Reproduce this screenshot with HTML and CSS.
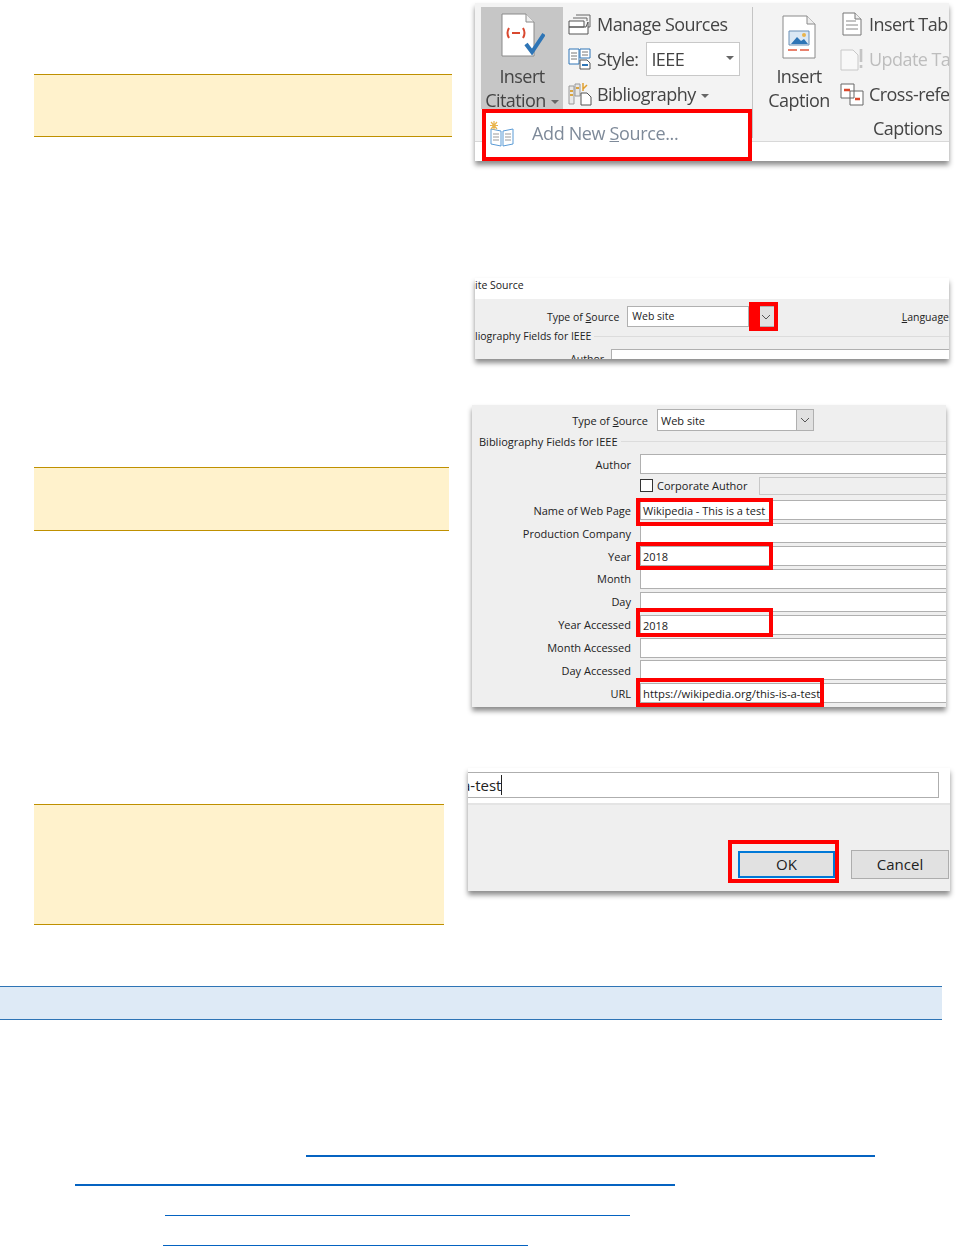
FILE: index.html
```html
<!DOCTYPE html>
<html lang="en">
<head>
<meta charset="utf-8">
<title>Add a citation source</title>
<link rel="stylesheet" href="styles.css">
</head>
<body>
<main class="page">

  <section class="row row-ribbon">
    <div class="note note-a"></div>
    <div class="shot shot-ribbon">
      <div class="ribbon soft">
        <div class="cite-btn">
          <svg class="big-icon" viewBox="0 0 46 44" width="46" height="44">
            <path d="M3 1h24l8 8v34H3z" fill="#fff" stroke="#8a8a8a"/>
            <path d="M27 1v8h8" fill="#eee" stroke="#8a8a8a"/>
            <path d="M10 15q-3 5 0 10M24 15q3 5 0 10M13 20h8" fill="none" stroke="#d9482f" stroke-width="2"/>
            <path d="M27 31l6 8 12-18" fill="none" stroke="#2e75b6" stroke-width="4"/>
          </svg>
          <span class="cite-label">Insert</span>
          <span class="cite-label">Citation<i class="caret"></i></span>
        </div>
        <div class="tool-col tool-col-main">
          <div class="tool">
            <svg viewBox="0 0 24 24" width="24" height="24"><path d="M5 6h14v3M8 3h14v12h-2" fill="none" stroke="#666"/><path d="M1 9h15v6H1zM1 15h17l2-5v12H1z" fill="#fff" stroke="#555"/></svg>
            <span>Manage Sources</span>
          </div>
          <div class="tool">
            <svg viewBox="0 0 24 24" width="24" height="24"><path d="M1 2h10v15H1zM12 2h10v9H12z" fill="#fff" stroke="#2e75b6"/><path d="M3 6h6M3 9h6M3 12h6M14 5h6M14 8h6" stroke="#777"/><path d="M12 13h7l3 3v6H12z" fill="#fff" stroke="#555"/><path d="M14 18h6" stroke="#2e75b6" stroke-width="2"/></svg>
            <span class="style-label">Style:</span>
            <span class="style-select"><span>IEEE</span><i class="caret"></i></span>
          </div>
          <div class="tool">
            <svg viewBox="0 0 24 24" width="24" height="24"><path d="M1 4h5v18H1zM7 2h5v12H7z" fill="#e8e8e8" stroke="#999"/><path d="M2 9h3M2 13h3M8 6h3" stroke="#d9a441" stroke-width="2"/><path d="M13 11h6l4 4v8H13z" fill="#fff" stroke="#555"/><path d="M15 1v8M19 3l-4 4" stroke="#e0a030" stroke-width="1.5"/></svg>
            <span>Bibliography<i class="caret"></i></span>
          </div>
        </div>
        <div class="divider"></div>
        <div class="caption-group">
          <div class="caption-tools">
            <div class="caption-btn">
              <svg class="big-icon" viewBox="0 0 34 44" width="34" height="44">
                <path d="M1 1h24l8 8v34H1z" fill="#fff" stroke="#8a8a8a"/>
                <path d="M25 1v8h8" fill="#eee" stroke="#8a8a8a"/>
                <path d="M7 16h20v14H7z" fill="#dbe8f4" stroke="#6a8fb5"/>
                <path d="M9 29l6-7 4 4 3-2 4 5z" fill="#2e75b6"/>
                <circle cx="22" cy="20" r="2" fill="#e9b44c"/>
                <path d="M6 35h9M18 35h9" stroke="#e2583e" stroke-width="1.5"/>
              </svg>
              <span class="cite-label">Insert</span>
              <span class="cite-label">Caption</span>
            </div>
            <div class="tool-col">
              <div class="tool">
                <svg viewBox="0 0 24 24" width="24" height="24"><path d="M3 1h12l6 6v16H3z" fill="#fff" stroke="#777"/><path d="M15 1v6h6" fill="#eee" stroke="#777"/><path d="M6 9h10M6 13h12M6 17h12" stroke="#888"/></svg>
                <span>Insert Table of Figures</span>
              </div>
              <div class="tool tool-off">
                <svg viewBox="0 0 24 24" width="24" height="24"><path d="M1 3h12l5 5v15H1z" fill="#f8f8f8" stroke="#c8c8c8"/><path d="M21 2v13M21 18v3" stroke="#c4c4c4" stroke-width="2.6"/></svg>
                <span>Update Table</span>
              </div>
              <div class="tool">
                <svg viewBox="0 0 24 24" width="24" height="24"><path d="M1 2h13v14H1zM10 9h13v14H10z" fill="#fff" stroke="#666"/><path d="M4 8h6M15 17h5" stroke="#d9472b" stroke-width="2.4"/></svg>
                <span>Cross-reference</span>
              </div>
            </div>
          </div>
          <div class="group-name">Captions</div>
        </div>
      </div>
      <div class="mark mark-add">
        <svg class="soft" viewBox="0 0 26 26" width="26" height="26"><path d="M2 8l10 2v15L2 23zM24 8l-10 2v15l10-2z" fill="#fff" stroke="#5b9bd5"/><path d="M4 13h6M4 16h6M4 19h6M16 13h6M16 16h6M16 19h6" stroke="#999"/><path d="M5 0v9M1 4.500h8M2 1l6 7M8 1L2 8" stroke="#e9b44c" stroke-width="1.200"/></svg>
        <span class="add-text soft">Add New <u>S</u>ource...</span>
      </div>
    </div>
  </section>

  <section class="row row-source">
    <div class="shot shot-source">
      <div class="source-title">ite Source</div>
      <div class="source-body">
        <div class="source-line">
          <span class="source-type">Type of <u>S</u>ource</span>
          <span class="source-input">Web site</span>
          <span class="source-arrow"><svg viewBox="0 0 10 6" width="10" height="6"><path d="M1 1l4 4 4-4" fill="none" stroke="#555"/></svg></span>
          <span class="source-lang"><u>L</u>anguage</span>
        </div>
        <div class="legend legend-cut"><span>liography Fields for IEEE</span><i></i></div>
        <div class="source-line source-author">
          <span class="source-author-label">Author</span>
          <span class="source-author-input"></span>
        </div>
      </div>
      <div class="mark mark-arrow"></div>
    </div>
  </section>

  <section class="row row-dialog">
    <div class="note note-b"></div>
    <div class="shot shot-dialog">
      <div class="type-line">
        <span class="type-label">Type of <u>S</u>ource</span>
        <span class="type-select"><span>Web site</span><span class="type-arrow"><svg viewBox="0 0 10 6" width="10" height="6"><path d="M1 1l4 4 4-4" fill="none" stroke="#555"/></svg></span></span>
      </div>
      <div class="legend legend-full"><span>Bibliography Fields for IEEE</span><i></i></div>
      <div class="fields">
        <label>Author</label><span class="input"></span>
        <span></span>
        <span class="corp"><i class="check"></i><span>Corporate Author</span><i class="corp-field"></i></span>
        <label>Name of Web Page</label><span class="input">Wikipedia - This is a test</span>
        <label>Production Company</label><span class="input"></span>
        <label>Year</label><span class="input">2018</span>
        <label>Month</label><span class="input"></span>
        <label>Day</label><span class="input"></span>
        <label>Year Accessed</label><span class="input">2018</span>
        <label>Month Accessed</label><span class="input"></span>
        <label>Day Accessed</label><span class="input"></span>
        <label>URL</label><span class="input input-url">https://wikipedia.org/this-is-a-test</span>
      </div>
      <div class="mark mark-name"></div>
      <div class="mark mark-year"></div>
      <div class="mark mark-accessed"></div>
      <div class="mark mark-url"></div>
    </div>
  </section>

  <section class="row row-ok">
    <div class="note note-c"></div>
    <div class="shot shot-ok">
      <div class="ok-top"><span class="ok-input"><span class="ok-text">a-test</span><i class="cursor"></i></span></div>
      <div class="ok-actions">
        <span class="btn btn-ok">OK</span>
        <span class="btn btn-cancel">Cancel</span>
      </div>
      <div class="mark mark-ok"></div>
    </div>
  </section>

  <div class="band"></div>

  <a class="rule rule-1" href="#"></a>
  <a class="rule rule-2" href="#"></a>
  <a class="rule rule-3" href="#"></a>
  <a class="rule rule-4" href="#"></a>
</main>
</body>
</html>
```

FILE: styles.css
```css
* { box-sizing: border-box; }
html, body { margin: 0; padding: 0; background: #fff; }
.page {
  width: 958px;
  height: 1246px;
  padding-top: 3px;
  overflow: hidden;
  font-family: "Open Sans", "Noto Sans", sans-serif;
  color: #2b2b2b;
}
.row { display: flex; align-items: flex-start; }
.row-source { margin-top: 117px; }
.row-dialog { margin-top: 46px; }
.row-ok { margin-top: 61px; }

.note {
  margin-left: 34px;
  background: #fff2cc;
  border-top: 1px solid #bf9000;
  border-bottom: 1px solid #bf9000;
}
.note-a { width: 418px; height: 63px; margin-top: 71px; }
.note-b { width: 415px; height: 64px; margin-top: 62px; }
.note-c { width: 410px; height: 121px; margin-top: 36px; }

.shot {
  position: relative;
  flex: none;
  overflow: visible;
  box-shadow: 0 4px 5px rgba(0, 0, 0, .45);
}
.mark { position: absolute; border: 4px solid #f00; }
.soft { filter: blur(.4px); }

/* ribbon */
.shot-ribbon { width: 474px; height: 158px; margin-left: 23px; background: #fff; }
.ribbon {
  display: flex;
  width: 474px;
  height: 139px;
  padding: 4px 0 0 6px;
  background: #f3f3f3;
  border-bottom: 1px solid #d8d8d8;
  overflow: hidden;
  font-size: 18px;
  letter-spacing: -.55px;
  color: #444;
}
.cite-btn {
  display: flex;
  flex-direction: column;
  align-items: center;
  flex: none;
  width: 82px;
  height: 102px;
  padding-top: 6px;
  background: #c6c6c6;
}
.big-icon { flex: none; margin-bottom: 7px; }
.cite-label { line-height: 24px; white-space: nowrap; }
.caret {
  display: inline-block;
  width: 0;
  height: 0;
  margin: 0 0 3px 5px;
  border: 4px solid transparent;
  border-top-color: #666;
  border-bottom: 0;
}
.tool-col {
  display: flex;
  flex-direction: column;
  flex: none;
  gap: 11px;
  padding-top: 5px;
}
.tool-col-main { width: 184px; margin-left: 5px; }
.tool {
  display: flex;
  align-items: center;
  gap: 5px;
  height: 24px;
  white-space: nowrap;
}
.tool svg { flex: none; }
.tool-off { color: #bdbdbd; }
.style-select {
  display: flex;
  align-items: center;
  justify-content: space-between;
  width: 94px;
  height: 34px;
  margin-left: 3px;
  padding: 0 5px 0 4px;
  background: #fff;
  border: 1px solid #c8c8c8;
}
.divider { flex: none; width: 1px; height: 131px; background: #c4c4c4; }
.caption-group { flex: none; }
.caption-tools { display: flex; }
.caption-btn {
  display: flex;
  flex-direction: column;
  align-items: center;
  flex: none;
  width: 87px;
  padding: 8px 0 0 5px;
}
.caption-btn .big-icon { margin-bottom: 5px; }
.group-name { width: 312px; margin-top: 4px; padding-left: 120px; line-height: 24px; }
.mark-add {
  left: 7px;
  top: 106px;
  display: flex;
  align-items: center;
  width: 270px;
  height: 52px;
  padding: 0 0 2px 3px;
  background: #fff;
}
.add-text { margin-left: 17px; padding-bottom: 2px; font-size: 18px; letter-spacing: -.36px; color: #7e8a99; }

/* source strip */
.shot-source { width: 474px; height: 81px; margin-left: 475px; background: #efefef; font-size: 10.500px; color: #222; }
.source-title { height: 21px; background: #fff; line-height: 14px; }
.source-body { padding-top: 7px; height: 60px; overflow: hidden; }
.source-line { display: flex; align-items: center; height: 21px; }
.source-type { width: 145px; text-align: right; }
.source-input {
  width: 122px;
  height: 21px;
  margin-left: 8px;
  padding-left: 4px;
  background: #fff;
  border: 1px solid #b0b0b0;
  line-height: 19px;
}
.source-arrow {
  display: flex;
  align-items: center;
  justify-content: center;
  width: 17px;
  height: 21px;
  margin-left: 9px;
  background: #e1e1e1;
  border: 1px solid #b0b0b0;
}
.source-lang { margin-left: 127px; white-space: nowrap; }
.legend { display: flex; align-items: center; white-space: nowrap; }
.legend i { flex: 1; height: 1px; margin-left: 3px; background: #dcdcdc; }
.legend-cut { height: 18px; }
.source-author { margin-top: 4px; align-items: flex-start; }
.source-author-label { width: 129px; padding-top: 3px; text-align: right; }
.source-author-input { flex: 1; height: 21px; margin-left: 7px; background: #fff; border: 1px solid #b0b0b0; border-right: 0; }
.mark-arrow { left: 274px; top: 24px; width: 29px; height: 29px; border-left-width: 11px; }

/* dialog */
.shot-dialog {
  width: 474px;
  height: 302px;
  margin-left: 23px;
  padding-top: 4px;
  background: #efefef;
  font-size: 11px;
  color: #222;
}
.type-line { display: flex; align-items: center; height: 22px; }
.type-label { width: 176px; text-align: right; }
.type-select {
  display: flex;
  align-items: center;
  justify-content: space-between;
  width: 157px;
  height: 22px;
  margin-left: 9px;
  padding-left: 3px;
  background: #fff;
  border: 1px solid #b0b0b0;
}
.type-arrow {
  display: flex;
  align-items: center;
  justify-content: center;
  width: 17px;
  height: 20px;
  background: #e1e1e1;
  border-left: 1px solid #b0b0b0;
}
.legend-full { height: 20px; padding-left: 7px; }
.fields {
  display: grid;
  grid-template-columns: 159px 306px;
  grid-auto-rows: 22.900px;
  column-gap: 9px;
  align-items: center;
  margin-top: 2px;
}
.fields label { text-align: right; }
.input {
  height: 20px;
  padding-left: 2px;
  background: #fff;
  border: 1px solid #b0b0b0;
  border-right: 0;
  line-height: 20px;
  white-space: nowrap;
}
.input-url { font-size: 11.300px; }
.corp { display: flex; align-items: center; margin-top: -3px; }
.check { width: 13px; height: 13px; background: #fff; border: 1px solid #333; }
.corp span { margin-left: 4px; }
.corp-field { flex: 1; height: 18px; margin-left: 12px; background: #efefef; border: 1px solid #c8c8c8; border-right: 0; }
.mark-name { left: 164px; top: 93px; width: 137px; height: 28px; }
.mark-year { left: 164px; top: 137px; width: 137px; height: 28px; }
.mark-accessed { left: 164px; top: 203px; width: 137px; height: 29px; }
.mark-url { left: 164px; top: 273px; width: 188px; height: 29px; }

/* ok strip */
.shot-ok { width: 482px; height: 123px; margin-left: 24px; background: #efefef; }
.ok-top {
  height: 37px;
  padding-top: 4px;
  background: #fff;
  border-bottom: 2px solid #e4e4e4;
}
.ok-input {
  display: flex;
  align-items: center;
  width: 471px;
  height: 26px;
  background: #fff;
  border: 1px solid #aeaeae;
  border-left: 0;
  overflow: hidden;
  font-size: 15px;
  color: #222;
}
.ok-text { margin-left: -6px; }
.cursor { width: 1px; height: 20px; background: #222; }
.ok-actions { display: flex; align-items: flex-start; padding: 45px 1px 0 270px; gap: 16px; }
.btn {
  display: flex;
  align-items: center;
  justify-content: center;
  height: 27px;
  padding-bottom: 2px;
  font-size: 15px;
  color: #222;
  background: #e1e1e1;
}
.btn-ok { width: 97px; margin-top: 1px; border: 2px solid #0078d7; }
.btn-cancel { width: 98px; height: 29px; border: 1px solid #adadad; }
.mark-ok { left: 260px; top: 72px; width: 111px; height: 43px; }

/* band and rules */
.band {
  width: 942px;
  height: 34px;
  margin-top: 61px;
  background: #deeaf6;
  border-top: 1px solid #2e74b5;
  border-bottom: 1px solid #2e74b5;
}
.rule { display: block; border-bottom: 2px solid #0563c1; }
.rule-1 { width: 569px; margin: 135px 0 0 306px; }
.rule-2 { width: 600px; margin: 27px 0 0 75px; }
.rule-3 { width: 465px; margin: 29px 0 0 165px; border-bottom-width: 1px; }
.rule-4 { width: 365px; margin: 29px 0 0 163px; border-bottom-width: 1px; }
```
